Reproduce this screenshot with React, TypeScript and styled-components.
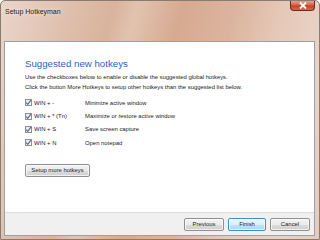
import * as React from "react"
import styled, { createGlobalStyle } from 'styled-components';

const GlobalStyle = createGlobalStyle`
  html, body {
    margin: 0;
    padding: 0;
    width: 320px;
    height: 240px;
    overflow: hidden;
    background: #ffffff;
  }
`;

interface Hotkey {
    keys: string;
    action: string;
}

const hotkeys: Hotkey[] = [
    { keys: 'WIN + -', action: 'Minimize active window' },
    { keys: 'WIN + * (Tn)', action: 'Maximize or restore active window' },
    { keys: 'WIN + S', action: 'Save screen capture' },
    { keys: 'WIN + N', action: 'Open notepad' },
];

export default function App() {
    return (
        <>
            <GlobalStyle />
            <Window>
                <TitleBar>
                    <Title>Setup Hotkeyman</Title>
                    <CloseButton>
                        <svg width="8" height="7" viewBox="0 0 8 7">
                            <path d="M1 0.5 L7 6.5 M7 0.5 L1 6.5" stroke="#fff" strokeWidth="1.8" />
                        </svg>
                    </CloseButton>
                </TitleBar>
                <Client>
                    <Content>
                        <Heading>Suggested new hotkeys</Heading>
                        <Description>
                            Use the checkboxes below to enable or disable the suggested global hotkeys.<br />
                            Click the button More Hotkeys to setup other hotkeys than the suggested list below.
                        </Description>
                        <HotkeyList>
                            {hotkeys.map(h => (
                                <HotkeyRow key={h.keys}>
                                    <Check>
                                        <svg width="7" height="7" viewBox="0 0 7 7">
                                            <path d="M1.2 3.6 L2.8 5.3 L5.9 1.2" stroke="#4a6796" strokeWidth="1.1" fill="none" />
                                        </svg>
                                    </Check>
                                    <Keys>{h.keys}</Keys>
                                    <Action>{h.action}</Action>
                                </HotkeyRow>
                            ))}
                        </HotkeyList>
                        <Button $width={65}>Setup more hotkeys</Button>
                    </Content>
                    <Footer>
                        <Button $width={40}>Previous</Button>
                        <Button $width={38} $focused>Finish</Button>
                        <Button $width={40}>Cancel</Button>
                    </Footer>
                </Client>
            </Window>
        </>
    );
}

const Window = styled.div`
    width: 320px;
    height: 240px;
    box-sizing: border-box;
    border: 1px solid #8a7a70;
    border-radius: 5px 5px 0 0;
    background: linear-gradient(105deg, #ead6ca 0%, #dfc0ae 18%, #d9b39c 30%, #e2c3b0 36%, #d6aa90 48%, #dcb49e 62%, #e5c8b7 74%, #e9d4c8 88%, #e3cbbd 100%);
    display: flex;
    flex-direction: column;
    font-family: "DejaVu Sans", sans-serif;
    overflow: hidden;
`;

const TitleBar = styled.div`
    height: 40px;
    display: flex;
    justify-content: space-between;
    align-items: flex-start;
    padding: 0 4px 0 4px;
`;

const Title = styled.div`
    margin-top: 7px;
    font-family: "Liberation Sans", sans-serif;
    font-size: 7px;
    color: #222;
    text-shadow: 0 0 4px rgba(255, 255, 255, 0.9);
`;

const CloseButton = styled.div`
    width: 25px;
    height: 10px;
    box-sizing: border-box;
    border: 1px solid #6e2a20;
    border-top: none;
    border-radius: 0 0 4px 4px;
    background: linear-gradient(#e9a290 0%, #d9604a 45%, #c8402a 55%, #d86a50 100%);
    display: flex;
    align-items: center;
    justify-content: center;
`;

const Client = styled.div`
    flex: 1;
    margin: 0 4px 3px 3px;
    border: 1px solid #9aa0a8;
    background: #ffffff;
    display: flex;
    flex-direction: column;
`;

const Content = styled.div`
    flex: 1;
    padding: 16px 0 0 20px;
    display: flex;
    flex-direction: column;
    align-items: flex-start;
`;

const Heading = styled.div`
    font-family: "Liberation Sans", sans-serif;
    font-size: 9.7px;
    color: #2a64c0;
    line-height: 12px;
`;

const Description = styled.div`
    margin-top: 2px;
    font-family: "Liberation Sans", sans-serif;
    font-size: 5.9px;
    line-height: 10px;
    color: #222;
`;

const HotkeyList = styled.div`
    margin-top: 4px;
    display: flex;
    flex-direction: column;
`;

const HotkeyRow = styled.div`
    height: 13.4px;
    display: flex;
    align-items: center;
    font-family: "Liberation Sans", sans-serif;
    font-size: 5.9px;
    color: #222;
`;

const Check = styled.div`
    width: 7px;
    height: 7px;
    box-sizing: border-box;
    border: 1px solid #8f8f8f;
    background: linear-gradient(135deg, #e4e4e4, #ffffff);
    display: flex;
    align-items: center;
    justify-content: center;
    margin-right: 2px;
    svg { flex: none; }
`;

const Keys = styled.div`
    width: 51px;
`;

const Action = styled.div``;

const Button = styled.div<{ $width: number; $focused?: boolean }>`
    width: ${p => p.$width}px;
    height: 13px;
    box-sizing: border-box;
    border: 1px solid ${p => (p.$focused ? '#3c90d0' : '#8e8f8f')};
    border-radius: 2px;
    background: ${p => (p.$focused
        ? 'linear-gradient(#eaf6fd 0%, #d9effc 50%, #bee6fd 51%, #a7d9f5 100%)'
        : 'linear-gradient(#f2f2f2 0%, #ebebeb 50%, #dddddd 51%, #cfcfcf 100%)')};
    box-shadow: inset 0 0 0 1px rgba(255, 255, 255, 0.7);
    display: flex;
    align-items: center;
    justify-content: center;
    font-family: "Liberation Sans", sans-serif;
    font-size: 5.9px;
    color: #222;
    margin-top: 14px;
`;

const Footer = styled.div`
    height: 22px;
    background: #f0f0f0;
    border-top: 1px solid #dcdcdc;
    display: flex;
    justify-content: flex-end;
    align-items: center;
    gap: 4px;
    padding-right: 4px;

    & > div {
        margin-top: 0;
    }
`;
